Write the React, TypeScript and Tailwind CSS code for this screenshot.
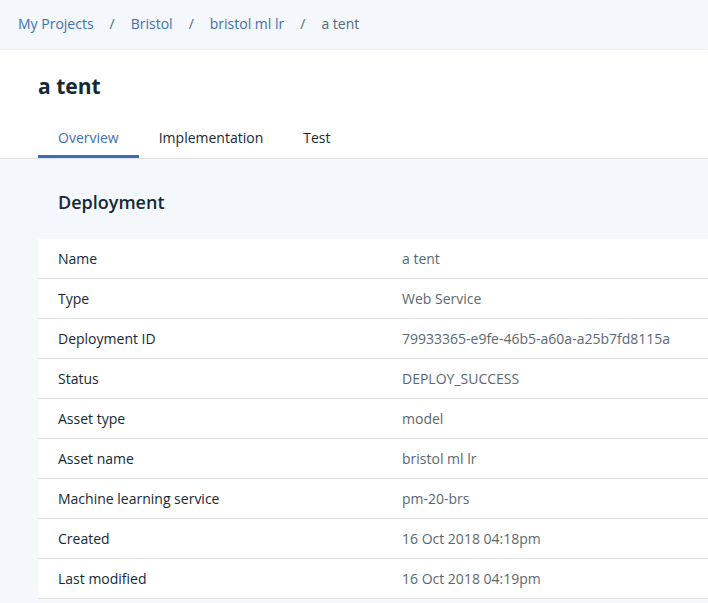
const crumbs = ["My Projects", "Bristol", "bristol ml lr"];

const rows: [string, string][] = [
  ["Name", "a tent"],
  ["Type", "Web Service"],
  ["Deployment ID", "79933365-e9fe-46b5-a60a-a25b7fd8115a"],
  ["Status", "DEPLOY_SUCCESS"],
  ["Asset type", "model"],
  ["Asset name", "bristol ml lr"],
  ["Machine learning service", "pm-20-brs"],
  ["Created", "16 Oct 2018 04:18pm"],
  ["Last modified", "16 Oct 2018 04:19pm"],
];

const tabs = ["Overview", "Implementation", "Test"];

const App = () => {
  return (
    <div className="min-h-[603px] bg-[#f4f7fb] font-['Open_Sans',sans-serif] text-[#152935]">
      <nav className="h-[50px] flex items-center pl-[18px] pb-[2px] text-sm">
        {crumbs.map((c) => (
          <span key={c} className="flex items-center">
            <a className="text-[#3d70b2]">{c}</a>
            <span className="mx-4 text-[#5a6872]">/</span>
          </span>
        ))}
        <span className="text-[#5a6872]">a tent</span>
      </nav>

      <header className="bg-white border-b border-[#dfe3e6] shadow-[0_-1px_2px_rgba(0,0,0,0.04)]">
        <h1 className="pl-[38px] pt-[22px] text-[21px] leading-7 font-bold">a tent</h1>
        <div className="flex pl-[38px] mt-[28px] text-sm leading-5">
          {tabs.map((t, i) => (
            <div
              key={t}
              className={
                i === 0
                  ? "px-5 pb-[7px] border-b-[3px] border-[#3d70b2] text-[#3d70b2]"
                  : "px-5 pb-[7px] border-b-[3px] border-transparent"
              }
            >
              {t}
            </div>
          ))}
        </div>
      </header>

      <section className="pl-[38px]">
        <h2 className="pl-5 h-[80px] pt-[6px] flex items-center text-lg font-semibold">Deployment</h2>
        <div className="bg-white">
          {rows.map(([k, v]) => (
            <div key={k} className="h-10 flex items-center border-b border-[#dfe3e6] text-sm">
              <div className="pl-5 w-[364px]">{k}</div>
              <div className="text-[#5a6872]">{v}</div>
            </div>
          ))}
        </div>
      </section>
    </div>
  );
};

export default App;
